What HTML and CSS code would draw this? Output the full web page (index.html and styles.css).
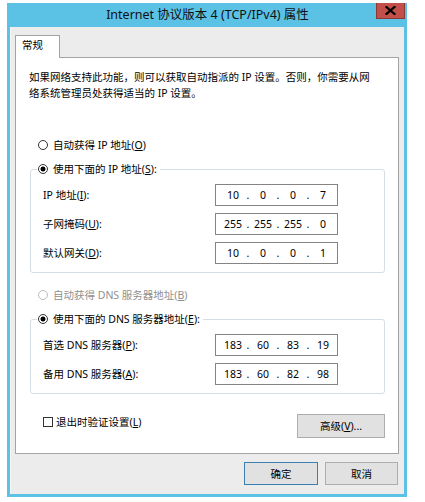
FILE: index.html
```html
<!DOCTYPE html>
<html lang="zh-CN">
<head>
<meta charset="utf-8">
<title>Internet 协议版本 4 (TCP/IPv4) 属性</title>
<link rel="stylesheet" href="styles.css">
</head>
<body>
<div class="window">
  <div class="titlebar">
    <div class="title">Internet 协议版本 4 (TCP/IPv4) 属性</div>
    <div class="close">
      <svg width="11" height="9" viewBox="0 0 11 9"><path d="M1.5 1 L9.5 8 M9.5 1 L1.5 8" stroke="#000" stroke-width="2.2" stroke-linecap="square"/></svg>
    </div>
  </div>
  <div class="client">
    <div class="tabs"><div class="tab">常规</div></div>
    <div class="panel">
      <p class="desc">如果网络支持此功能，则可以获取自动指派的 IP 设置。否则，你需要从网<br>络系统管理员处获得适当的 IP 设置。</p>

      <div class="option first"><span class="radio"></span><span>自动获得 IP 地址(<u>O</u>)</span></div>

      <fieldset class="group">
        <legend class="option"><span class="radio checked"></span><span>使用下面的 IP 地址(<u>S</u>):</span></legend>
        <div class="row"><span>IP 地址(<u>I</u>):</span><div class="ipbox"><span>10</span><i>.</i><span>0</span><i>.</i><span>0</span><i>.</i><span>7</span></div></div>
        <div class="row"><span>子网掩码(<u>U</u>):</span><div class="ipbox"><span>255</span><i>.</i><span>255</span><i>.</i><span>255</span><i>.</i><span>0</span></div></div>
        <div class="row"><span>默认网关(<u>D</u>):</span><div class="ipbox"><span>10</span><i>.</i><span>0</span><i>.</i><span>0</span><i>.</i><span>1</span></div></div>
      </fieldset>

      <div class="option disabled"><span class="radio"></span><span>自动获得 DNS 服务器地址(<u>B</u>)</span></div>

      <fieldset class="group">
        <legend class="option"><span class="radio checked"></span><span>使用下面的 DNS 服务器地址(<u>E</u>):</span></legend>
        <div class="row"><span>首选 DNS 服务器(<u>P</u>):</span><div class="ipbox"><span>183</span><i>.</i><span>60</span><i>.</i><span>83</span><i>.</i><span>19</span></div></div>
        <div class="row"><span>备用 DNS 服务器(<u>A</u>):</span><div class="ipbox"><span>183</span><i>.</i><span>60</span><i>.</i><span>82</span><i>.</i><span>98</span></div></div>
      </fieldset>

      <div class="bottom">
        <div class="check"><span class="box"></span><span>退出时验证设置(<u>L</u>)</span></div>
        <button class="btn adv" type="button">高级(<u>V</u>)...</button>
      </div>
    </div>
    <div class="actions">
      <button class="btn default" type="button">确定</button>
      <button class="btn cancel" type="button">取消</button>
    </div>
  </div>
</div>
</body>
</html>
```

FILE: styles.css
```css
* { box-sizing: border-box; }

body {
  margin: 0;
  background: #ffffff;
  font-family: "Noto Sans", "Noto Sans CJK SC", sans-serif;
  font-size: 10.5px;
  line-height: 16px;
  color: #000;
}

.window {
  margin: 3px 0 0 7px;
  width: 400px;
  height: 494px;
  background: #5bc2e6;
  padding: 0 3px 3px 3px;
  display: flex;
  flex-direction: column;
}

.titlebar {
  height: 24px;
  margin: 0 -1px 0 0;
  display: grid;
  grid-template-columns: 1fr auto 1fr;
}

.title {
  grid-column: 2;
  font-size: 12.5px;
  line-height: 24px;
  color: #111;
  padding-top: 0;
}

.close {
  grid-column: 3;
  justify-self: end;
  align-self: start;
  width: 29px;
  height: 16px;
  background: #c24f49;
  border: 1px solid #8a3833;
  border-top: none;
  display: flex;
  align-items: center;
  justify-content: center;
}

.client {
  flex: 1;
  background: #ececec;
  border-left: 1px solid #f6f6f6;
  padding: 8px 5px 0 4px;
}

.tabs { display: flex; }

.tab {
  width: 45px;
  height: 23px;
  margin-bottom: -1px;
  position: relative;
  background: #fff;
  border: 1px solid #a3a3a3;
  border-bottom: none;
  padding: 1px 0 0 6px;
  line-height: 16px;
}

.panel {
  background: #fff;
  border: 1px solid #a3a3a3;
  padding: 11px 13px 15px 13px;
}

.desc {
  margin: 0;
  line-height: 16px;
}

.option {
  display: flex;
  align-items: center;
  gap: 5px;
  height: 16px;
  margin-left: 9px;
}

.option.first { margin-top: 36px; }

.option.disabled {
  color: #8f8f8f;
  margin-top: 14px;
}

.radio {
  width: 10px;
  height: 10px;
  border: 1px solid #333;
  border-radius: 50%;
  background: #fff;
  flex: none;
}

.radio.checked {
  background: radial-gradient(circle, #000 0 2.2px, #fff 2.8px);
}

.option.disabled .radio { border-color: #bcbcbc; }

.group {
  margin: 8px 0 0 1px;
  padding: 7px 12px 8px 12px;
  border: 1px solid #d6dee4;
  border-radius: 3px;
  display: grid;
  row-gap: 7px;
  min-width: 0;
}

.group legend.option {
  margin-left: -6px;
  padding: 0 3px 0 1px;
}

.row {
  display: grid;
  grid-template-columns: 172px 123px;
  align-items: center;
  height: 22px;
}

.ipbox {
  height: 22px;
  border: 1px solid #848484;
  background: #fff;
  padding: 0 0 0 5px;
  display: flex;
  align-items: center;
}

.ipbox span {
  width: 24px;
  text-align: center;
}

.ipbox i {
  font-style: normal;
  width: 6px;
  text-align: center;
}

.bottom {
  margin: 20px 0 0 14px;
  display: flex;
  justify-content: space-between;
  align-items: flex-start;
}

.check {
  display: flex;
  align-items: center;
  gap: 3px;
  height: 16px;
}

.check .box {
  width: 10px;
  height: 10px;
  border: 1px solid #333;
  background: #fff;
}

.btn {
  font: inherit;
  color: #000;
  background: #e1e1e1;
  border: 1px solid #adadad;
  padding: 0;
  margin: 0;
  text-align: center;
}

.adv {
  width: 88px;
  height: 24px;
}

.actions {
  display: flex;
  justify-content: flex-end;
  gap: 7px;
  margin-top: 8px;
  padding-right: 1px;
}

.default {
  width: 74px;
  height: 23px;
  border-color: #3c7fb1;
}

.cancel {
  width: 73px;
  height: 23px;
}
```
